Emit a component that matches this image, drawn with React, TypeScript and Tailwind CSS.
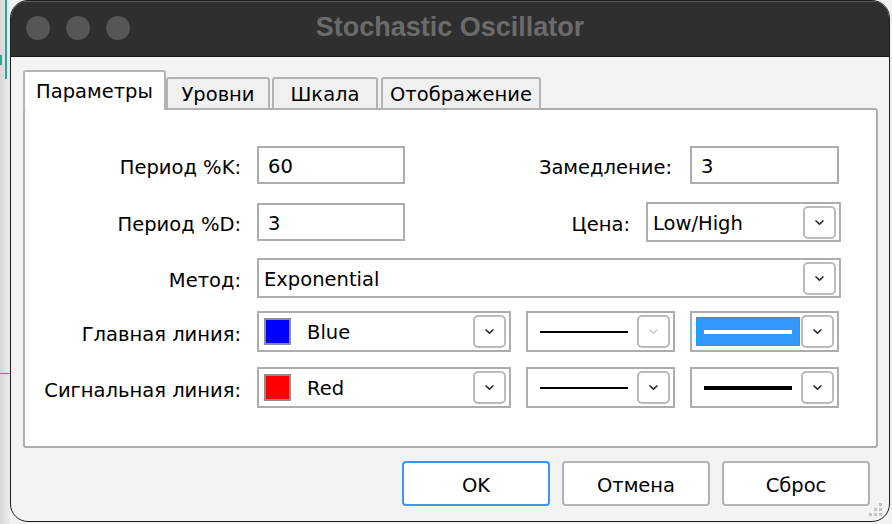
import React from 'react';

const Chevron = ({ disabled }: { disabled?: boolean }) => (
    <svg width="11" height="7" viewBox="0 0 11 7" fill="none">
        <path d="M1.5 1.5L5.5 5.2L9.5 1.5" stroke={disabled ? '#c9c9c9' : '#2b2b2b'} strokeWidth="1.6" />
    </svg>
);

const DropButton = ({ disabled }: { disabled?: boolean }) => (
    <div className="w-[33px] h-[33px] mr-[3px] shrink-0 rounded-[5px] border-2 border-[#bababa] bg-white flex items-center justify-center">
        <Chevron disabled={disabled} />
    </div>
);

const Label = ({ children, className = '' }: { children: React.ReactNode; className?: string }) => (
    <div className={`text-right whitespace-nowrap pt-[6px] ${className}`}>{children}</div>
);

const TextBox = ({ value, className = '' }: { value: string; className?: string }) => (
    <div className={`h-[38px] border-2 border-[#adadad] bg-white flex items-center pl-[9px] pt-[3px] ${className}`}>{value}</div>
);

const Select = ({ children, className = '', disabled }: { children: React.ReactNode; className?: string; disabled?: boolean }) => (
    <div className={`h-[41px] border-2 border-[#adadad] bg-white flex items-center ${className}`}>
        <div className="flex-1 flex items-center h-full min-w-0">{children}</div>
        <DropButton disabled={disabled} />
    </div>
);

const ColorSelect = ({ color, name }: { color: string; name: string }) => (
    <Select className="w-[254px] ml-[16px]">
        <div className="flex items-center pl-[5px]">
            <div className="w-[27px] h-[27px] border-2 border-[#8d8d8d]" style={{ backgroundColor: color }} />
            <span className="ml-[16px] pt-[3px]">{name}</span>
        </div>
    </Select>
);

const tabs = ['Уровни', 'Шкала', 'Отображение'];
const tabWidths = ['w-[104px]', 'w-[106px] ml-[2px]', 'w-[160px] ml-[3px]'];

export default function App() {
    return (
        <div
            className="w-[892px] h-[524px] flex bg-[#f2f2f2] overflow-hidden text-black"
            style={{ fontFamily: '"DejaVu Sans", "Liberation Sans", sans-serif' }}
        >
            {/* chart edge behind the dialog */}
            <div className="w-[10px] h-full relative bg-gradient-to-r from-[#d6d6d6] to-[#ececec] shrink-0">
                <div className="absolute left-[5px] top-0 w-[2px] h-[79px] bg-[#26a69a]" />
                <div className="absolute left-0 top-[55px] w-[2px] h-[10px] bg-[#26a69a]" />
                <div className="absolute left-0 top-[373px] w-[10px] h-[1px] bg-[#26a69a]" />
            </div>

            {/* window */}
            <div className="relative w-[880px] h-[522px] shrink-0 flex flex-col rounded-[18px] border border-[#1c1c1c] bg-[#f3f3f3] overflow-hidden">
                {/* title bar */}
                <div className="h-[56px] shrink-0 bg-[#2f2f2f] border-b border-[#151515] border-t border-t-[#5a5a5a] grid grid-cols-[1fr_auto_1fr] items-center">
                    <div className="flex items-center gap-[16px] pl-[15px] pb-[2px]">
                        <div className="w-[24px] h-[24px] rounded-full bg-[#565656]" />
                        <div className="w-[24px] h-[24px] rounded-full bg-[#565656]" />
                        <div className="w-[24px] h-[24px] rounded-full bg-[#565656]" />
                    </div>
                    <div
                        className="text-[27px] font-bold text-[#6b6b6b] leading-none pb-[3px]"
                        style={{ fontFamily: '"Liberation Sans", Arial, sans-serif' }}
                    >
                        Stochastic Oscillator
                    </div>
                    <div />
                </div>

                {/* body */}
                <div className="flex-1 flex flex-col pl-[12px] pr-[10px] pt-[13px] text-[19.5px]">
                    {/* tabs */}
                    <div className="flex items-end h-[40px] relative z-10 -mb-[2px]">
                        <div className="w-[143px] h-[40px] bg-white border-2 border-b-0 border-[#b3b3b3] rounded-t-[3px] flex items-center justify-center pt-[1px]">
                            Параметры
                        </div>
                        {tabs.map((t, i) => (
                            <div
                                key={t}
                                className={`${tabWidths[i]} h-[33px] bg-[#f0f0f0] border-2 border-[#b3b3b3] rounded-t-[3px] flex items-center justify-center pt-[2px]`}
                            >
                                {t}
                            </div>
                        ))}
                    </div>

                    {/* panel */}
                    <div className="w-[855px] h-[340px] bg-white border-2 border-[#adadad] rounded-[3px] flex flex-col">
                        <div className="flex items-center mt-[36px]">
                            <Label className="w-[216px] shrink-0">Период %K:</Label>
                            <TextBox value="60" className="w-[148px] ml-[16px]" />
                            <Label className="flex-1">Замедление:</Label>
                            <TextBox value="3" className="w-[149px] ml-[18px] mr-[37px]" />
                        </div>

                        <div className="flex items-center mt-[18px]">
                            <Label className="w-[216px] shrink-0">Период %D:</Label>
                            <TextBox value="3" className="w-[148px] ml-[16px]" />
                            <Label className="flex-1">Цена:</Label>
                            <Select className="w-[195px] ml-[16px] mr-[35px] !h-[40px]">
                                <span className="pl-[5px] pt-[3px]">Low/High</span>
                            </Select>
                        </div>

                        <div className="flex items-center mt-[16px]">
                            <Label className="w-[216px] shrink-0">Метод:</Label>
                            <Select className="flex-1 ml-[16px] mr-[35px] !h-[40px]">
                                <span className="pl-[5px] pt-[3px]">Exponential</span>
                            </Select>
                        </div>

                        <div className="flex items-center mt-[13px]">
                            <Label className="w-[216px] shrink-0">Главная линия:</Label>
                            <ColorSelect color="#0000ff" name="Blue" />
                            <Select className="w-[149px] ml-[15px]" disabled>
                                <div className="ml-[12px] w-[88px] h-[2px] bg-black" />
                            </Select>
                            <Select className="w-[149px] ml-[15px]">
                                <div className="ml-[4px] w-[104px] h-[29px] bg-[#3399ff] border border-dotted border-[#c0692a] flex items-center justify-center">
                                    <div className="w-[88px] h-[4px] bg-white" />
                                </div>
                            </Select>
                        </div>

                        <div className="flex items-center mt-[15px]">
                            <Label className="w-[216px] shrink-0">Сигнальная линия:</Label>
                            <ColorSelect color="#ff0000" name="Red" />
                            <Select className="w-[149px] ml-[15px]">
                                <div className="ml-[12px] w-[88px] h-[2px] bg-black" />
                            </Select>
                            <Select className="w-[149px] ml-[15px]">
                                <div className="ml-[12px] w-[88px] h-[4px] bg-black" />
                            </Select>
                        </div>
                    </div>

                    {/* buttons */}
                    <div className="flex justify-end gap-[12px] mt-[13px] pr-[9px]">
                        <button className="w-[148px] h-[45px] bg-white rounded-[4px] border-2 border-[#3d95f5] pt-[4px]">OK</button>
                        <button className="w-[148px] h-[45px] bg-white rounded-[4px] border-2 border-[#b3b3b3] pt-[4px]">Отмена</button>
                        <button className="w-[148px] h-[45px] bg-white rounded-[4px] border-2 border-[#b3b3b3] pt-[4px]">Сброс</button>
                    </div>
                </div>

                {/* resize grip */}
                <svg className="absolute right-[5px] bottom-[3px]" width="16" height="16" viewBox="0 0 16 16">
                    <rect x="11" y="1" width="3" height="3" fill="#c2c2c2" />
                    <rect x="6" y="6" width="3" height="3" fill="#c2c2c2" />
                    <rect x="11" y="6" width="3" height="3" fill="#c2c2c2" />
                    <rect x="1" y="11" width="3" height="3" fill="#c2c2c2" />
                    <rect x="6" y="11" width="3" height="3" fill="#c2c2c2" />
                    <rect x="11" y="11" width="3" height="3" fill="#c2c2c2" />
                </svg>
            </div>
        </div>
    );
}
